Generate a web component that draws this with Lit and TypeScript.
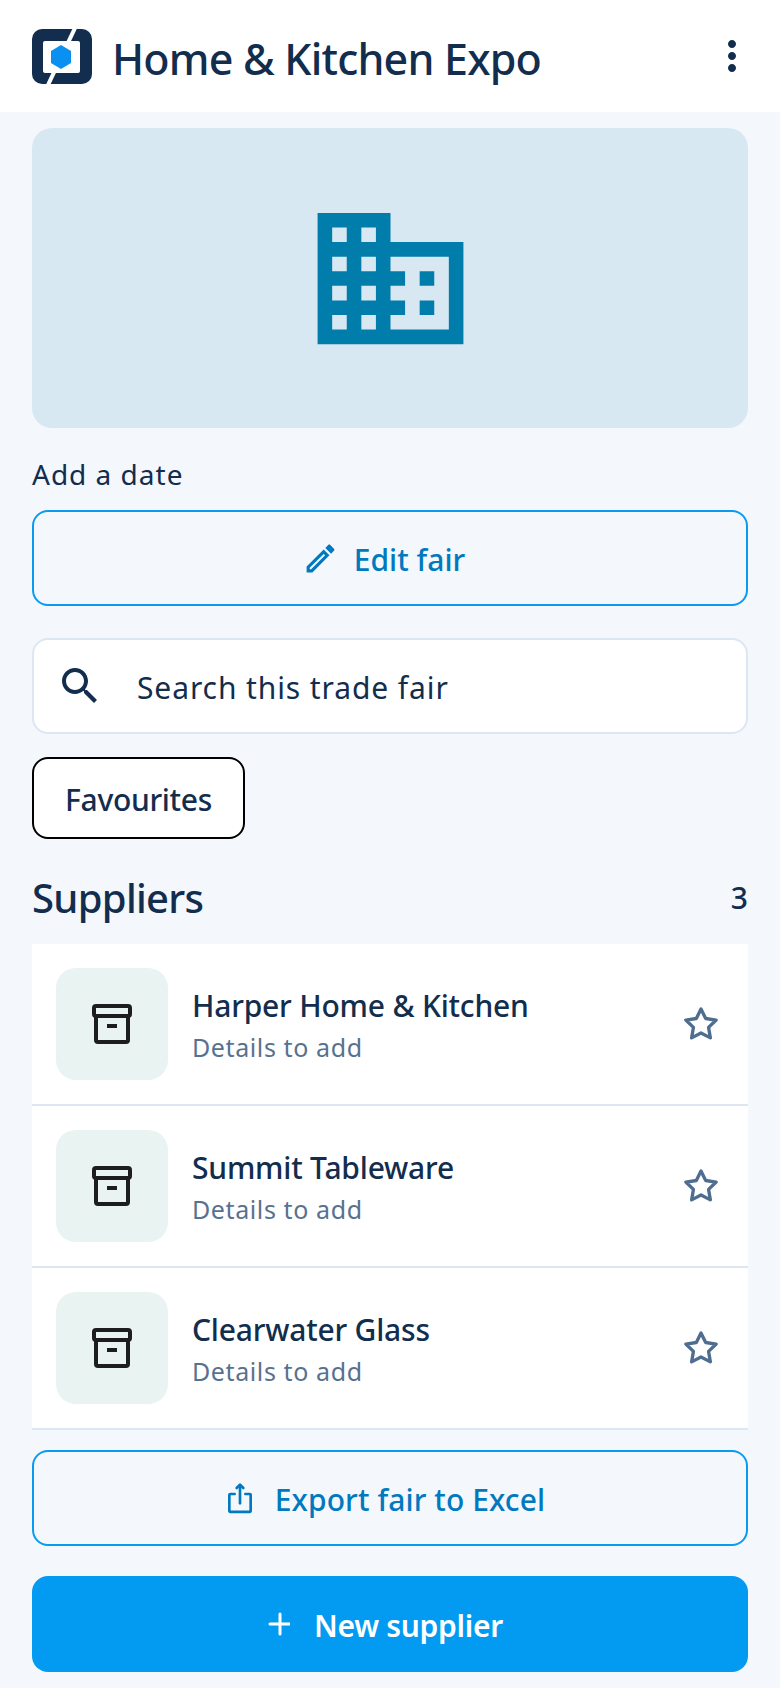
import { LitElement, html, css, svg, TemplateResult } from 'lit'
import { customElement, state } from 'lit/decorators.js'

interface Supplier {
  name: string
  note: string
}

const icon = (size: number, body: TemplateResult, cls = 'fill'): TemplateResult => html`
  <svg class=${cls} width=${size} height=${size} viewBox="0 0 24 24">${body}</svg>
`

const EDIT = svg`<path d="M3 17.25V21h3.75L17.81 9.94l-3.75-3.75L3 17.25zM5.92 19H5v-.92l9.06-9.06.92.92L5.92 19zM20.71 7.04c.39-.39.39-1.02 0-1.41l-2.34-2.34c-.39-.39-1.02-.39-1.41 0l-1.83 1.83 3.75 3.75 1.83-1.83z"/>`
const SEARCH = svg`<path d="M15.5 14h-.79l-.28-.27C15.41 12.59 16 11.11 16 9.5 16 5.91 13.09 3 9.5 3S3 5.91 3 9.5 5.91 16 9.5 16c1.61 0 3.09-.59 4.23-1.57l.27.28v.79l5 4.99L20.49 19l-4.99-5zm-6 0C7.01 14 5 11.99 5 9.5S7.01 5 9.5 5 14 7.01 14 9.5 11.99 14 9.5 14z"/>`
const DOMAIN = svg`<path d="M12 7V3H2v18h20V7H12zM6 19H4v-2h2v2zm0-4H4v-2h2v2zm0-4H4V9h2v2zm0-4H4V5h2v2zm4 12H8v-2h2v2zm0-4H8v-2h2v2zm0-4H8V9h2v2zm0-4H8V5h2v2zm10 12h-8v-2h2v-2h-2v-2h2v-2h-2V9h8v10zm-2-8h-2v2h2v-2zm0 4h-2v2h2v-2z"/>`
const MORE = svg`<path d="M12 8c1.1 0 2-.9 2-2s-.9-2-2-2-2 .9-2 2 .9 2 2 2zm0 2c-1.1 0-2 .9-2 2s.9 2 2 2 2-.9 2-2-.9-2-2-2zm0 6c-1.1 0-2 .9-2 2s.9 2 2 2 2-.9 2-2-.9-2-2-2z"/>`
const BOX = svg`
  <rect x="3" y="3" width="18" height="5" rx="1"/>
  <path d="M4 8v12a1 1 0 0 0 1 1h14a1 1 0 0 0 1-1V8"/>
  <path d="M9.500 13h5" stroke-linecap="butt"/>
`
const STAR = svg`<path d="M12 3l2.800 5.700 6.300.92-4.550 4.430 1.070 6.270L12 17.360l-5.620 2.960 1.070-6.270L2.900 9.620l6.300-.92z"/>`
const SHARE = svg`
  <path d="M8 9H4.700a.7.7 0 0 0-.7.700v12a.7.7 0 0 0 .7.700h14.600a.7.7 0 0 0 .7-.7v-12a.7.7 0 0 0-.7-.7H16"/>
  <path d="M12 16V2.500"/>
  <path d="M9.500 4.500L12 2l2.500 2.500"/>
`
const PLUS = svg`<path d="M14 2v20M4 12h20"/>`

@customElement('app-root')
export class AppRoot extends LitElement {
  @state()
  private suppliers: Supplier[] = [
    { name: 'Harper Home & Kitchen', note: 'Details to add' },
    { name: 'Summit Tableware', note: 'Details to add' },
    { name: 'Clearwater Glass', note: 'Details to add' },
  ]

  static styles = css`
    :host {
      display: block;
      min-height: 1688px;
      background: #f4f7fc;
      color: #122d4d;
      font-family: 'Noto Sans', sans-serif;
    }

    svg {
      display: block;
      flex: none;
    }

    .fill {
      fill: currentColor;
    }

    .line {
      fill: none;
      stroke: currentColor;
      stroke-width: 2;
      stroke-linecap: round;
      stroke-linejoin: round;
    }

    .topbar {
      height: 112px;
      box-sizing: border-box;
      background: #fff;
      display: flex;
      align-items: center;
      padding: 0 24px 0 32px;
    }

    .app-title {
      flex: 1;
      margin: 0 0 0 20px;
      padding-top: 5px;
      font-size: 43px;
      font-weight: 500;
      letter-spacing: -0.8px;
      line-height: 56px;
    }

    .content {
      padding: 16px 32px;
      display: flex;
      flex-direction: column;
    }

    .hero {
      height: 300px;
      border-radius: 20px;
      background: #d8e8f2;
      color: #007daa;
      display: flex;
      align-items: center;
      justify-content: center;
    }

    .date {
      margin-top: 28px;
      font-size: 28px;
      line-height: 36px;
      letter-spacing: 1px;
    }

    .btn {
      height: 96px;
      box-sizing: border-box;
      padding-right: 11px;
      border-radius: 16px;
      display: flex;
      align-items: center;
      justify-content: center;
      font-size: 30px;
      font-weight: 500;
    }

    .btn span {
      padding-top: 2px;
    }

    .outline {
      border: 2px solid #0a9bf0;
      color: #0079bf;
    }

    .primary {
      background: #029bf1;
      color: #fff;
      gap: 24px;
      margin-top: 30px;
      font-weight: 600;
      letter-spacing: -0.3px;
    }

    .primary .line {
      stroke-width: 3;
    }

    .edit {
      margin-top: 18px;
      padding-right: 13px;
      gap: 15px;
    }

    .export {
      margin-top: 20px;
      gap: 19px;
      letter-spacing: 0.1px;
    }

    .search {
      margin-top: 32px;
      height: 96px;
      box-sizing: border-box;
      border: 2px solid #dce7f3;
      border-radius: 16px;
      background: #fff;
      display: flex;
      align-items: center;
      gap: 33px;
      padding-left: 22px;
      font-size: 30px;
      letter-spacing: 0.9px;
    }

    .search span {
      padding-top: 3px;
    }

    .chip {
      margin-top: 23px;
      align-self: flex-start;
      width: 213px;
      height: 82px;
      box-sizing: border-box;
      padding-top: 2px;
      border: 2px solid #000;
      border-radius: 16px;
      background: #fff;
      display: flex;
      align-items: center;
      justify-content: center;
      font-size: 30px;
      font-weight: 500;
      letter-spacing: -0.3px;
    }

    .section-head {
      height: 105px;
      box-sizing: border-box;
      padding-top: 12px;
      display: flex;
      align-items: center;
      justify-content: space-between;
    }

    .section-title {
      margin: 0;
      font-size: 40px;
      font-weight: 500;
      letter-spacing: -0.7px;
    }

    .count {
      font-size: 30px;
      font-weight: 500;
    }

    .list {
      background: #fff;
    }

    .row {
      display: flex;
      align-items: center;
      padding: 24px 27px 24px 24px;
      border-bottom: 2px solid #dce7f3;
    }

    .thumb {
      width: 112px;
      height: 112px;
      flex: none;
      border-radius: 20px;
      background: #e9f3f2;
      color: #1d1d1d;
      display: flex;
      align-items: center;
      justify-content: center;
    }

    .info {
      flex: 1;
      margin-left: 24px;
      padding-top: 2px;
    }

    .name {
      font-size: 30px;
      font-weight: 500;
      line-height: 40px;
      letter-spacing: -0.2px;
    }

    .note {
      margin-top: 3px;
      font-size: 25px;
      line-height: 36px;
      letter-spacing: 0.6px;
      color: #57728f;
    }

    .star {
      color: #4f6d8f;
    }
  `

  render(): TemplateResult {
    return html`
      <header class="topbar">
        ${this.renderLogo()}
        <h1 class="app-title">Home &amp; Kitchen Expo</h1>
        ${icon(48, MORE)}
      </header>
      <main class="content">
        <div class="hero">${icon(175, DOMAIN)}</div>
        <div class="date">Add a date</div>
        <div class="btn outline edit">${icon(37, EDIT)}<span>Edit fair</span></div>
        <div class="search">${icon(48, SEARCH)}<span>Search this trade fair</span></div>
        <div class="chip">Favourites</div>
        <div class="section-head">
          <h2 class="section-title">Suppliers</h2>
          <span class="count">${this.suppliers.length}</span>
        </div>
        <div class="list">${this.suppliers.map(s => this.renderRow(s))}</div>
        <div class="btn outline export">${icon(32, SHARE, 'line')}<span>Export fair to Excel</span></div>
        <div class="btn primary">${icon(24, PLUS, 'line')}<span>New supplier</span></div>
      </main>
    `
  }

  private renderLogo(): TemplateResult {
    return html`
      <svg width="60" height="55" viewBox="0 0 60 55">
        <rect width="60" height="55" rx="10" fill="#122d4d" />
        <rect x="11" y="12" width="37" height="32" rx="2" fill="#fff" />
        <path d="M43 -1L16 56" stroke="#fff" stroke-width="4" />
        <path d="M29 16l10 6v12l-10 6-10-6V22z" fill="#0a90f0" />
      </svg>
    `
  }

  private renderRow(supplier: Supplier): TemplateResult {
    return html`
      <div class="row">
        <div class="thumb">${icon(48, BOX, 'line')}</div>
        <div class="info">
          <div class="name">${supplier.name}</div>
          <div class="note">${supplier.note}</div>
        </div>
        <div class="star">${icon(40, STAR, 'line')}</div>
      </div>
    `
  }
}
